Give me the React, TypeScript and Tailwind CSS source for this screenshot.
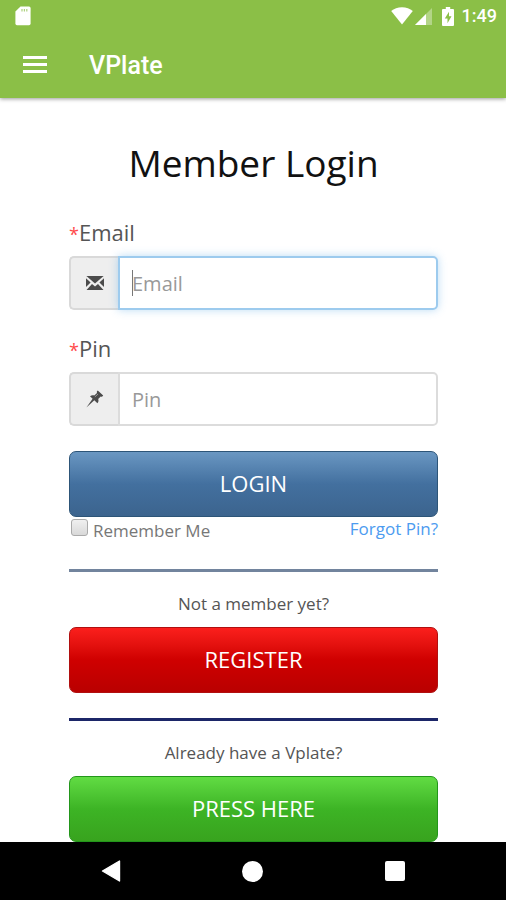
import React from "react";

function SdCardIcon() {
  return (
    <svg width="16" height="20" viewBox="0 0 16 20" aria-hidden="true">
      <path d="M5.5 0.5H14a1.6 1.6 0 0 1 1.6 1.6v15.5a1.6 1.6 0 0 1-1.6 1.6H2a1.6 1.6 0 0 1-1.6-1.6V5.6z" fill="#fff" />
      <path d="M7 3v2.4M9.4 3v2.4M11.8 3v2.4" stroke="#8bbf47" strokeOpacity="0.7" strokeWidth="1.2" />
    </svg>
  );
}

function WifiIcon() {
  return (
    <svg width="22" height="18" viewBox="0 0 22 18" aria-hidden="true">
      <path d="M11 17.6 0.2 4.1C3 1.7 6.8 0.3 11 0.3s8 1.4 10.8 3.8z" fill="#fff" />
    </svg>
  );
}

function SignalIcon() {
  return (
    <svg width="17" height="17" viewBox="0 0 17 17" aria-hidden="true">
      <path d="M0 17 17 0v17z" fill="#fff" fillOpacity="0.35" />
      <path d="M0 17 11 6v11z" fill="#fff" />
    </svg>
  );
}

function BatteryIcon() {
  return (
    <svg width="12" height="19" viewBox="0 0 12 19" aria-hidden="true">
      <path d="M3.8 0h4.4v2H11a1 1 0 0 1 1 1v15a1 1 0 0 1-1 1H1a1 1 0 0 1-1-1V3a1 1 0 0 1 1-1h2.8z" fill="#fff" />
      <path d="M7 4.8 2.8 11.5h2.7v4.7l4-6.9H7z" fill="#8bbf47" />
    </svg>
  );
}

function EnvelopeIcon() {
  return (
    <svg width="18" height="14" viewBox="0 0 18 14" fill="#4b4b4b" aria-hidden="true">
      <path d="M0.4 0h17.2L9 7.4z" />
      <path d="M0 2.2 4.6 6.4 0 11z" />
      <path d="M18 2.2 13.4 6.4 18 11z" />
      <path d="M6 8 9 10.5 12 8l5.5 6H0.5z" />
    </svg>
  );
}

function PushpinIcon() {
  return (
    <svg width="18" height="18" viewBox="0 0 18 18" fill="#4b4b4b" aria-hidden="true">
      <path d="M11.8 0.6 17.2 5.6C16.8 6.6 15.8 6.9 14.7 6.4L12.2 9C12.8 10.6 12.6 12 11.4 13.2L8.3 10.3 0.4 17.6 6.6 8.8 4 6.2C5.2 5.2 6.7 5 8.3 5.4L11 3C10.6 1.9 10.9 1 11.8 0.6z" />
      <path d="M8.9 6.9 12 4.1" stroke="#aaa" strokeWidth="0.8" />
    </svg>
  );
}

type FieldProps = {
  id: string;
  label: string;
  type: string;
  active?: boolean;
  icon: React.ReactNode;
};

function Field({ id, label, type, active, icon }: FieldProps) {
  return (
    <div>
      <label htmlFor={id} className="block h-10 text-[22px] leading-8 text-[#555]">
        <span className="text-[18px] text-[#ff4a4a]">*</span>
        {label}
      </label>
      <div className="flex h-[54px]">
        <span className="flex w-[49px] shrink-0 items-center justify-center rounded-l-[5px] border-2 border-r-0 border-[#d9d9d9] bg-[#eee]">
          {icon}
        </span>
        <div className="relative min-w-0 flex-1">
          <input
            id={id}
            type={type}
            placeholder={label}
            className={
              "h-full w-full rounded-r-[5px] border-2 bg-white px-3 text-[20px] text-[#555] outline-none placeholder:text-[#999] placeholder:opacity-100 " +
              (active ? "border-[#9dcbee] shadow-[0_0_9px_rgba(102,175,233,0.45)]" : "border-[#dcdcdc]")
            }
          />
          {active && <span className="absolute top-[14px] left-[14px] h-[26px] w-px bg-[#777]" />}
        </div>
      </div>
    </div>
  );
}

const buttonBase =
  "block h-[66px] w-full rounded-[7px] border pb-[2px] text-center text-[22px] leading-8 text-white";

export default function App() {
  return (
    <div className="flex min-h-screen flex-col bg-white font-['Open_Sans','Noto_Sans',sans-serif]">
      <header className="relative h-[98px] bg-[#8bbf47] font-[Roboto,sans-serif] text-white shadow-[0_1px_4px_rgba(0,0,0,0.4)]">
        <div className="flex h-8 items-center justify-between pr-[9px] pl-[15px]">
          <SdCardIcon />
          <div className="flex items-center">
            <WifiIcon />
            <span className="ml-[2px]"><SignalIcon /></span>
            <span className="ml-[10px]"><BatteryIcon /></span>
            <span className="ml-2 text-[18px] leading-6 font-medium">1:49</span>
          </div>
        </div>
        <div className="flex h-16 items-center pl-[23px]">
          <button type="button" aria-label="Open menu" className="flex w-6 flex-col gap-1">
            <span className="h-[3px] bg-white" />
            <span className="h-[3px] bg-white" />
            <span className="h-[3px] bg-white" />
          </button>
          <span className="ml-[42px] pt-1 text-[25px] leading-8 font-medium">VPlate</span>
        </div>
      </header>

      <main className="flex-1 pt-10 pr-[68px] pl-[69px]">
        <h1 className="text-center text-[37px] leading-[50px] text-[#111]">Member Login</h1>
        <form className="mt-7" onSubmit={(e) => e.preventDefault()}>
          <div className="flex flex-col gap-[22px]">
            <Field id="email" label="Email" type="email" active icon={<EnvelopeIcon />} />
            <Field id="pin" label="Pin" type="password" icon={<PushpinIcon />} />
          </div>
          <button
            type="submit"
            className={buttonBase + " mt-[25px] border-[#2d5578] bg-linear-to-b from-[#6a97c2] via-[#43709f] to-[#3c648e]"}
          >
            LOGIN
          </button>
          <div className="flex h-[52px] items-start justify-between text-[17px] leading-6">
            <label className="flex items-start text-[#777]">
              <input
                type="checkbox"
                className="mt-[2px] ml-[2px] h-[17px] w-[17px] appearance-none rounded-[3px] border border-[#aaa] bg-linear-to-b from-[#f0f0f0] to-[#d9d9d9]"
              />
              <span className="mt-[2px] ml-[5px]">Remember Me</span>
            </label>
            <a href="#forgot" className="text-[#4c9bf0]">Forgot Pin?</a>
          </div>
        </form>

        <hr className="h-[3px] border-0 bg-[#72849d]" />
        <p className="mt-5 mb-[11px] text-center text-[17px] leading-6 text-[#555]">Not a member yet?</p>
        <button
          type="button"
          className={buttonBase + " border-[#b01010] bg-linear-to-b from-[#fb1f1c] via-[#cf0000] to-[#b90000]"}
        >
          REGISTER
        </button>

        <hr className="mt-[25px] h-[3px] border-0 bg-[#1c2668]" />
        <p className="mt-5 mb-[11px] text-center text-[17px] leading-6 text-[#555]">Already have a Vplate?</p>
        <button
          type="button"
          className={buttonBase + " border-[#23961b] bg-linear-to-b from-[#61dc43] via-[#3db425] to-[#38a31e]"}
        >
          PRESS HERE
        </button>
      </main>

      <nav className="flex h-[58px] items-center justify-around bg-black px-10" aria-label="System navigation">
        <button type="button" aria-label="Back">
          <svg width="20" height="22" viewBox="0 0 20 22" aria-hidden="true">
            <path d="M18.5 1v20L1.5 11z" fill="#fff" stroke="#fff" strokeWidth="1.4" strokeLinejoin="round" />
          </svg>
        </button>
        <button type="button" aria-label="Home" className="h-[21px] w-[21px] rounded-full bg-white" />
        <button type="button" aria-label="Recent apps" className="h-5 w-5 rounded-[2px] bg-white" />
      </nav>
    </div>
  );
}
